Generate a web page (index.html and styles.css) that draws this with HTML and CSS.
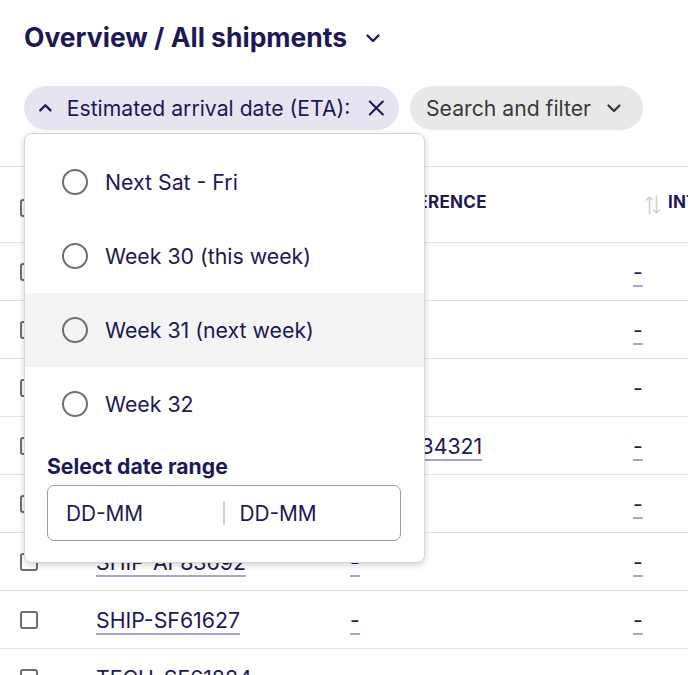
FILE: index.html
```html
<!DOCTYPE html>
<html>
<head>
<meta charset="utf-8">
<link rel="stylesheet" href="styles.css">
</head>
<body>
<div class="page">
  <header class="title-bar">
    <h1 class="title">Overview / All shipments</h1>
    <svg class="title-chevron" width="18" height="18" viewBox="0 0 18 18"><path d="M3.5 6.5 L9 12 L14.5 6.5" fill="none" stroke="#1d1856" stroke-width="2.4" stroke-linecap="round" stroke-linejoin="round"/></svg>
  </header>

  <div class="filters">
    <div class="chip chip-active">
      <svg class="chip-icon" width="18" height="18" viewBox="0 0 18 18"><path d="M3.5 11.5 L9 6 L14.5 11.5" fill="none" stroke="#1d1856" stroke-width="2.5" stroke-linecap="round" stroke-linejoin="round"/></svg>
      <span class="chip-label">Estimated arrival date (ETA):</span>
      <svg class="chip-close" width="20" height="20" viewBox="0 0 20 20"><path d="M3 3 L17 17 M17 3 L3 17" fill="none" stroke="#1d1856" stroke-width="2.2" stroke-linecap="round"/></svg>
    </div>
    <div class="chip chip-plain">
      <span class="chip-label">Search and filter</span>
      <svg class="chip-icon" width="18" height="18" viewBox="0 0 18 18"><path d="M3.5 6.5 L9 12 L14.5 6.5" fill="none" stroke="#3a3a3a" stroke-width="2.4" stroke-linecap="round" stroke-linejoin="round"/></svg>
    </div>

    <div class="dropdown">
      <div class="option"><span class="radio"></span><span>Next Sat - Fri</span></div>
      <div class="option"><span class="radio"></span><span>Week 30 (this week)</span></div>
      <div class="option option-hover"><span class="radio"></span><span>Week 31 (next week)</span></div>
      <div class="option"><span class="radio"></span><span>Week 32</span></div>
      <div class="range-label">Select date range</div>
      <div class="range-input">
        <span class="range-part">DD-MM</span>
        <span class="range-divider"></span>
        <span class="range-part">DD-MM</span>
      </div>
    </div>
  </div>

  <div class="table">
    <div class="row head">
      <div class="cell cb-cell"><span class="checkbox"></span></div>
      <div class="cell th-text"><span class="th">SHIPMENT</span></div>
      <div class="cell th-cell"><svg class="sort-icon" width="16" height="22" viewBox="0 0 16 22"><path d="M4.5 20 V3 M1.5 6 L4.5 3 L7.5 6 M11.5 2 V19 M8.5 16 L11.5 19 L14.5 16" fill="none" stroke="#cfcfcf" stroke-width="1.6" stroke-linecap="round" stroke-linejoin="round"/></svg><span class="th">REFERENCE</span></div>
      <div class="cell th-cell"><svg class="sort-icon" width="16" height="22" viewBox="0 0 16 22"><path d="M4.5 20 V3 M1.5 6 L4.5 3 L7.5 6 M11.5 2 V19 M8.5 16 L11.5 19 L14.5 16" fill="none" stroke="#cfcfcf" stroke-width="1.6" stroke-linecap="round" stroke-linejoin="round"/></svg><span class="th">INTERNAL REF</span></div>
    </div>
    <div class="row">
      <div class="cell cb-cell"><span class="checkbox"></span></div>
      <div class="cell"><a class="link">SHIP-AF82011</a></div>
      <div class="cell"><a class="link">-</a></div>
      <div class="cell"><a class="link">-</a></div>
    </div>
    <div class="row">
      <div class="cell cb-cell"><span class="checkbox"></span></div>
      <div class="cell"><a class="link">SHIP-SF60418</a></div>
      <div class="cell"><a class="link">-</a></div>
      <div class="cell"><a class="link">-</a></div>
    </div>
    <div class="row">
      <div class="cell cb-cell"><span class="checkbox"></span></div>
      <div class="cell"><a class="link">SHIP-AF83120</a></div>
      <div class="cell"><a class="link">-</a></div>
      <div class="cell"><span class="plain">-</span></div>
    </div>
    <div class="row">
      <div class="cell cb-cell"><span class="checkbox"></span></div>
      <div class="cell"><a class="link">SHIP-SF61002</a></div>
      <div class="cell"><a class="link">REF-1234321</a></div>
      <div class="cell"><a class="link">-</a></div>
    </div>
    <div class="row">
      <div class="cell cb-cell"><span class="checkbox"></span></div>
      <div class="cell"><a class="link">SHIP-AF83554</a></div>
      <div class="cell"><a class="link">-</a></div>
      <div class="cell"><a class="link">-</a></div>
    </div>
    <div class="row">
      <div class="cell cb-cell"><span class="checkbox"></span></div>
      <div class="cell"><a class="link">SHIP-AF83692</a></div>
      <div class="cell"><a class="link">-</a></div>
      <div class="cell"><a class="link">-</a></div>
    </div>
    <div class="row">
      <div class="cell cb-cell"><span class="checkbox"></span></div>
      <div class="cell"><a class="link">SHIP-SF61627</a></div>
      <div class="cell"><a class="link">-</a></div>
      <div class="cell"><a class="link">-</a></div>
    </div>
    <div class="row">
      <div class="cell cb-cell"><span class="checkbox"></span></div>
      <div class="cell"><a class="link">TECH-SF61884</a></div>
      <div class="cell"><a class="link">-</a></div>
      <div class="cell"><a class="link">-</a></div>
    </div>
  </div>
</div>
</body>
</html>
```

FILE: styles.css
```css
* { box-sizing: border-box; }
html, body {
  margin: 0;
  padding: 0;
  background: #ffffff;
  overflow: hidden;
}
body {
  font-family: Inter, "Noto Sans", sans-serif;
  color: #1d1856;
  width: 688px;
  height: 675px;
}
.page {
  width: 688px;
  height: 675px;
  overflow: hidden;
}
.title-bar {
  display: flex;
  align-items: center;
  padding: 21px 0 0 24px;
  height: 53px;
}
.title {
  margin: 0;
  font-size: 26.5px;
  line-height: 32px;
  font-weight: 700;
  letter-spacing: 0;
}
.title-chevron {
  margin-left: 17px;
  margin-top: 2px;
}
.filters {
  position: relative;
  display: flex;
  gap: 11px;
  padding: 0 0 0 24px;
  margin-top: 33px;
  height: 44px;
}
.chip {
  display: flex;
  align-items: center;
  height: 44px;
  border-radius: 22px;
  font-size: 21.2px;
  line-height: 24px;
}
.chip-active {
  background: #e6e4f0;
  padding: 0 13px 0 13px;
  width: 375px;
}
.chip-active .chip-label { margin-left: 13px; }
.chip-active .chip-close { margin-left: 17px; }
.chip-plain {
  background: #e8e8e8;
  color: #3a3a3a;
  padding: 0 20px 0 16px;
  width: 233px;
}
.chip-plain .chip-icon { margin-left: 14px; }
.chip-label { white-space: nowrap; }

.dropdown {
  position: absolute;
  left: 24px;
  top: 47px;
  width: 401px;
  height: 430px;
  background: #ffffff;
  border: 1px solid #d6d6d6;
  border-radius: 8px;
  box-shadow: 0 2px 6px rgba(0, 0, 0, 0.18);
  padding-top: 11px;
  z-index: 5;
  overflow: hidden;
}
.option {
  display: flex;
  align-items: center;
  height: 74px;
  padding-left: 37px;
  font-size: 21.3px;
  line-height: 24px;
}
.option-hover { background: #f4f4f4; }
.radio {
  width: 26px;
  height: 26px;
  border: 2.5px solid #6e6e6e;
  border-radius: 50%;
  margin-right: 17px;
  flex: none;
}
.range-label {
  margin: 13px 0 0 22px;
  font-size: 21.2px;
  line-height: 24px;
  font-weight: 700;
}
.range-input {
  display: flex;
  align-items: center;
  margin: 7px 0 0 22px;
  width: 354px;
  height: 56px;
  border: 1.5px solid #9e9e9e;
  border-radius: 7px;
  padding-left: 18px;
  font-size: 20.8px;
}
.range-part:first-child { width: 157px; }
.range-divider {
  width: 1.5px;
  height: 24px;
  background: #d2d2d2;
  margin-right: 15px;
}

.table {
  margin-top: 36px;
  border-top: 1.5px solid #e2e2e2;
}
.row {
  display: grid;
  grid-template-columns: 96px 254px 283px 200px;
  height: 58px;
  border-bottom: 1.5px solid #e2e2e2;
  font-size: 21.3px;
}
.row.head {
  height: 76px;
  box-shadow: 0 2px 3px rgba(0, 0, 0, 0.04);
}
.cell {
  display: flex;
  align-items: center;
  white-space: nowrap;
}
.cb-cell { padding-left: 20px; }
.checkbox {
  width: 18px;
  height: 18px;
  border: 2px solid #6e6e6e;
  border-radius: 3px;
}
.head .checkbox { margin-top: 6px; }
.th-cell, .th-text { padding-bottom: 6px; }
.th-cell { padding-left: 12px; }
.sort-icon { margin-right: 7px; margin-top: 6px; flex: none; }
.th {
  font-size: 17px;
  font-weight: 700;
  letter-spacing: 0.3px;
}
.link {
  color: #1d1856;
  text-decoration: underline;
  text-decoration-color: #a9a4cc;
  text-decoration-thickness: 1.5px;
  text-underline-offset: 5px;
}
.plain { color: #1d1856; }
```
